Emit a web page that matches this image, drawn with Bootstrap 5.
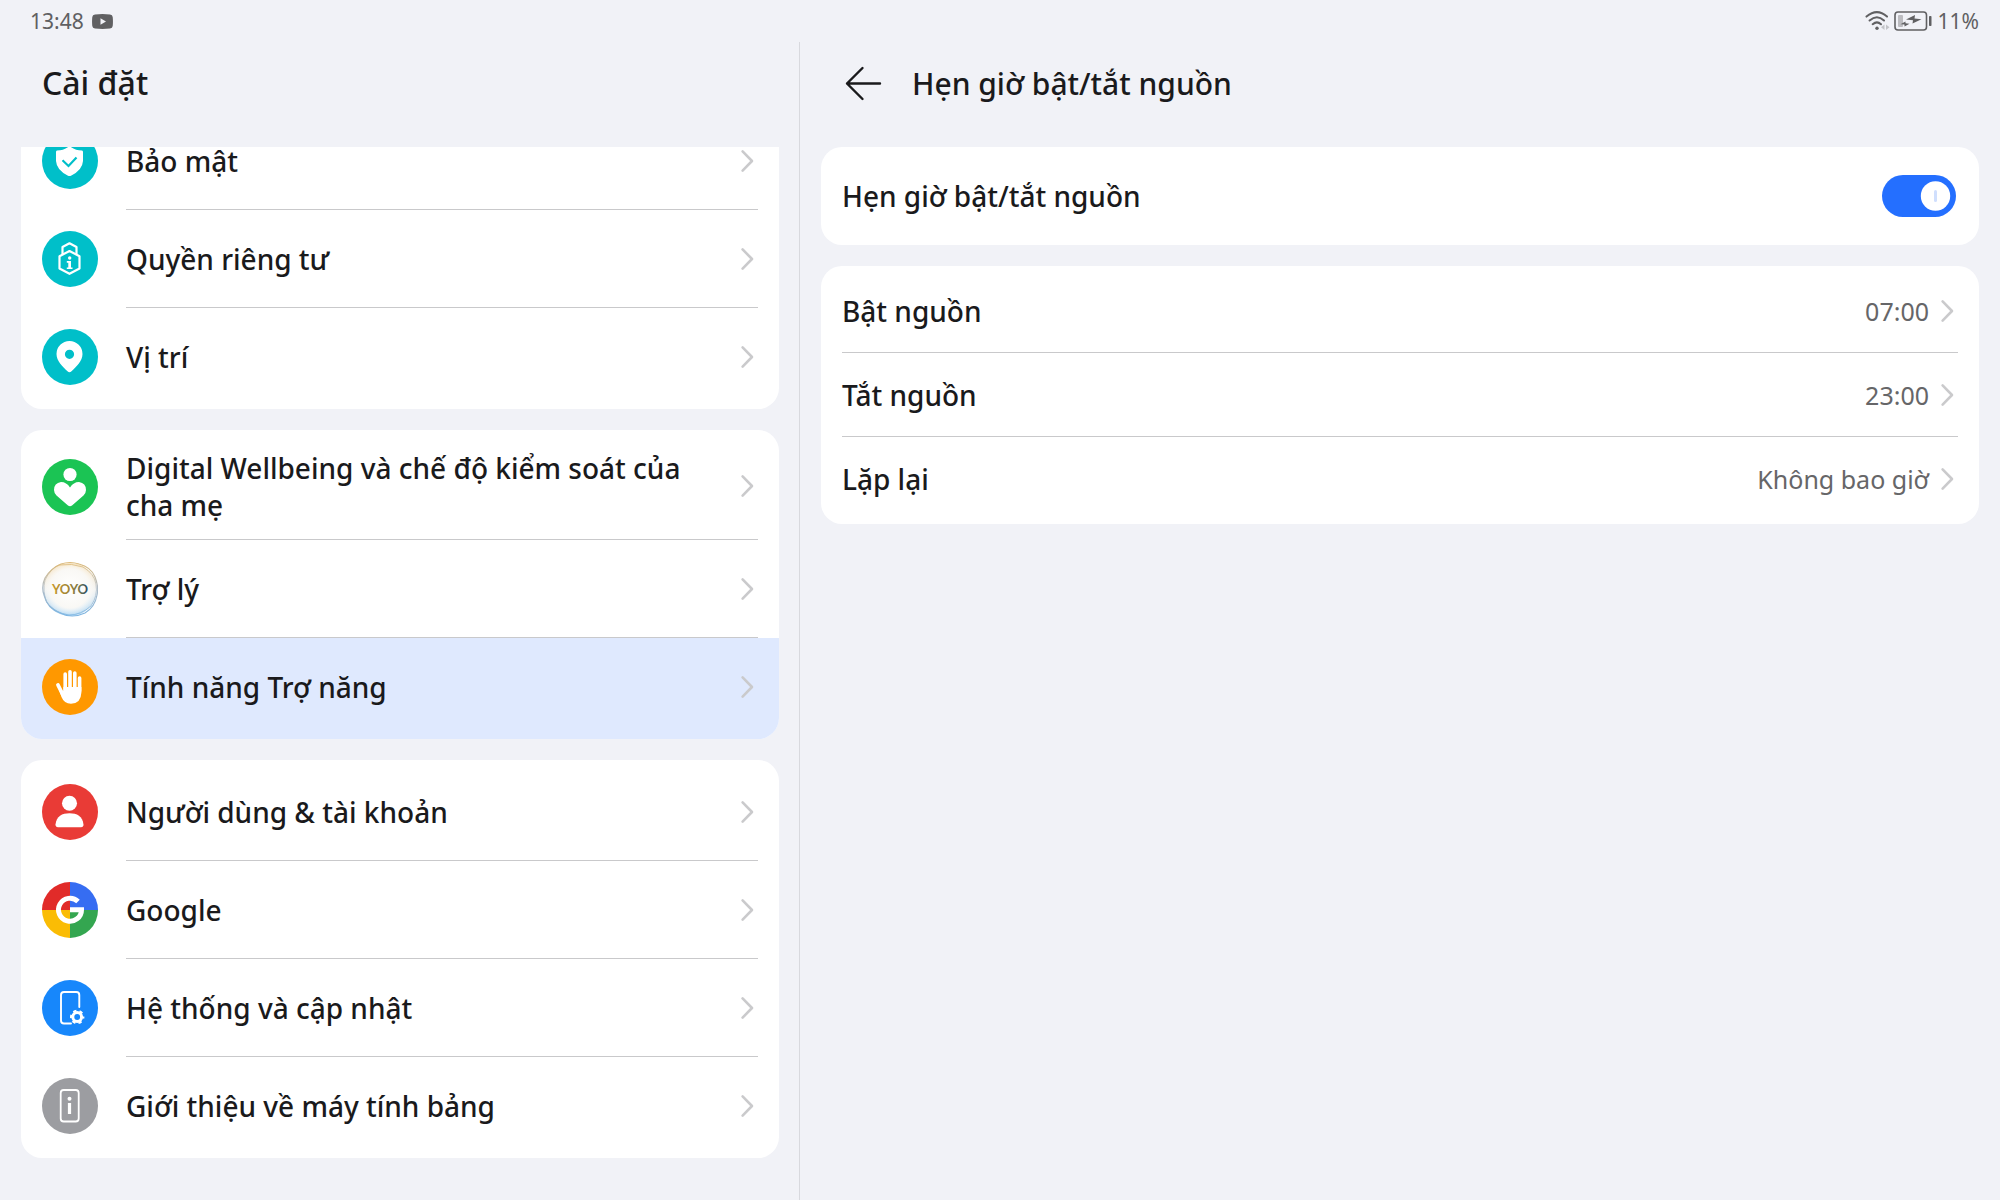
<!DOCTYPE html>
<html lang="vi">
<head>
<meta charset="utf-8">
<meta name="viewport" content="width=device-width, initial-scale=1">
<title>Cài đặt</title>
<link rel="stylesheet" href="https://cdn.jsdelivr.net/npm/bootstrap@5.3.0/dist/css/bootstrap.min.css">
<style>
  body { background: #f1f2f7; color: #1a1a1c; font-family: "Noto Sans", sans-serif; font-size: 28px; line-height: 37px; }
  .status-bar { height: 42px; padding: 0 21px 0 30px; font-size: 21px; line-height: 42px; color: #606062; }
  .status-bar svg { display: block; }
  .pane-menu { flex: 0 0 40%; border-right: 1px solid #d8d9de; }
  .pane-menu, .pane-detail { padding: 0 20px 42px 21px; min-width: 0; }
  .pane-detail { padding-right: 21px; }
  .pane-head { height: 105px; padding: 0 21px 24px; }
  .pane-title { font-size: 32px; line-height: 40px; font-weight: 500; margin: 0; }
  h2.pane-title { font-size: 30px; padding-top: 2px; }
  .back-btn { width: 42px; height: 42px; margin-right: 28px; }
  .stack { display: flex; flex-direction: column; gap: 21px; }
  /* the menu is scrolled, so its first group starts above the list's edge */
  .menu-scrolled { margin-top: -38px; }
  .panel { background: #fff; border-radius: 21px; overflow: hidden; padding: 3px 0; }
  .entry { display: flex; padding: 0 21px; color: inherit; text-decoration: none; }
  .entry-body { flex: 1; min-width: 0; display: flex; align-items: center; justify-content: space-between; padding-right: 4px; min-height: 98px; border-bottom: 1px solid #c9c9cb; }
  .entry:last-child .entry-body { border-bottom-color: transparent; }
  .entry-body.two-line { min-height: 107px; }
  .entry-label { max-width: 580px; padding-top: 2px; font-weight: 500; }
  .entry-icon { width: 56px; height: 56px; flex: none; margin-right: 28px; align-self: center; }
  .panel:has(.active-entry) { padding-bottom: 0; }
  .active-entry { background: #dfe9fe; padding-bottom: 3px; }
  .pane-detail .entry-body { min-height: 84px; }
  .pane-detail .entry-body.single { min-height: 92px; padding-right: 2px; }
  .entry-value { font-size: 25px; color: #666668; margin-right: 11px; padding-top: 2px; }
  .chev { width: 14px; height: 24px; flex: none; fill: none; stroke: #cacacc; stroke-width: 2.6; stroke-linecap: round; stroke-linejoin: round; }
  .power-switch.form-check-input { width: 74px; height: 42px; margin: 0; float: none; border: 0; border-radius: 21px; cursor: pointer; background-size: 74px 42px; }
  .power-switch.form-check-input:checked { background-color: #246fff; background-position: center; background-image: url("data:image/svg+xml,%3csvg xmlns='http://www.w3.org/2000/svg' viewBox='0 0 74 42'%3e%3ccircle cx='53.5' cy='21' r='14.7' fill='%23fff'/%3e%3crect x='52' y='15' width='3' height='12' rx='1.5' fill='%23d0dffd'/%3e%3c/svg%3e"); }
</style>
</head>
<body>
<svg class="d-none" aria-hidden="true">
  <symbol id="chevron" viewBox="0 0 14 24"><path d="M2.600 2.400 L12 12 L2.600 21.600"/></symbol>
</svg>
<div class="d-flex flex-column min-vh-100">
  <header class="status-bar d-flex align-items-center justify-content-between">
    <div class="d-flex align-items-center">
      <span class="me-2">13:48</span>
      <svg width="21" height="15" viewBox="0 0 21 15"><path d="M3 .5Q10.500-.3 18 .5Q20.500.8 20.700 3Q21.200 7.500 20.700 12Q20.500 14.200 18 14.500Q10.500 15.300 3 14.500Q.5 14.200.3 12Q-.2 7.500.3 3Q.5.8 3 .5Z" fill="#606062"/><path d="M8.500 4.300L14 7.500L8.500 10.700Z" fill="#f1f2f7"/></svg>
    </div>
    <div class="d-flex align-items-center">
      <svg class="me-1" width="25" height="20" viewBox="0 0 25 20" fill="none" stroke="#606062" stroke-width="2" stroke-linecap="round"><path d="M1.500 5.600Q12-3.400 22 5.600M4.600 9.500Q12 3 19 9.500M7.700 13.200Q12 9.500 16 13.200"/><circle cx="12" cy="17.300" r="1.700" fill="#606062" stroke="none"/><path d="M19.500 13.500V19L16 16.300ZM21 13.500V19L24.500 16.300Z" fill="#c3c4c8" stroke="none"/></svg>
      <svg width="44" height="20" viewBox="0 0 44 20"><rect x="1" y="1" width="31.500" height="18" rx="3" fill="none" stroke="#606062" stroke-width="1.600"/><rect x="4" y="4" width="5" height="12" rx="1" fill="#bcbcc0"/><rect x="35" y="5" width="2.500" height="10" rx=".8" fill="#606062"/><path d="M12 8.500L21 4L20.500 7.500L27.500 8.200L18.500 12.500L19 9.300ZM6.500 13.200L11.500 10.500V12.300L15.500 12.800L10.500 15.500V13.600Z" fill="#606062"/></svg>
      <span>11%</span>
    </div>
  </header>

  <main class="d-flex flex-grow-1">
    <nav class="pane-menu" aria-label="Cài đặt">
      <div class="pane-head d-flex align-items-center"><h1 class="pane-title">Cài đặt</h1></div>
      <div class="overflow-hidden">
        <div class="stack menu-scrolled">
          <div class="panel">
            <a href="#" class="entry">
              <svg class="entry-icon" viewBox="0 0 56 56"><circle cx="28" cy="28" r="28" fill="#00bfc9"/><path d="M27.500 13Q33 17.500 40 17.500Q41 17.700 41 19V28Q40.500 37 29 42.700Q27.500 43.500 26 42.700Q14.500 37 14 28V19Q14 17.700 15 17.500Q22 17.500 27.500 13Z" fill="#fff"/><path d="M20.500 27.300L26.500 33L34.500 24.500" fill="none" stroke="#00bfc9" stroke-width="2.200"/></svg>
              <span class="entry-body"><span class="entry-label">Bảo mật</span><svg class="chev"><use href="#chevron"/></svg></span>
            </a>
            <a href="#" class="entry">
              <svg class="entry-icon" viewBox="0 0 56 56"><circle cx="28" cy="28" r="28" fill="#00bfc9"/><g fill="none" stroke="#fff" stroke-width="2.200" stroke-linejoin="round"><path d="M20.500 24V16L27.500 12.300L34.500 16V24"/><path d="M27.500 20L37.500 25.200V37.500L27.500 42.800L17.500 37.500V25.200Z"/></g><circle cx="27.700" cy="27" r="1.700" fill="#fff"/><path d="M24.800 30H29V36.500H30.500V38H24.800V36.500H26.300V31.700H24.800Z" fill="#fff"/></svg>
              <span class="entry-body"><span class="entry-label">Quyền riêng tư</span><svg class="chev"><use href="#chevron"/></svg></span>
            </a>
            <a href="#" class="entry">
              <svg class="entry-icon" viewBox="0 0 56 56"><circle cx="28" cy="28" r="28" fill="#00bfc9"/><path fill-rule="evenodd" d="M27.500 12A13 13 0 0 0 14.500 25C14.500 32 20.500 37.500 25.500 42.300Q27.500 44 29.500 42.300C34.500 37.500 40.500 32 40.500 25A13 13 0 0 0 27.500 12ZM27.500 20.700A4.600 4.600 0 1 1 27.500 29.900A4.600 4.600 0 1 1 27.500 20.700Z" fill="#fff"/></svg>
              <span class="entry-body"><span class="entry-label">Vị trí</span><svg class="chev"><use href="#chevron"/></svg></span>
            </a>
          </div>

          <div class="panel">
            <a href="#" class="entry">
              <svg class="entry-icon" viewBox="0 0 56 56"><circle cx="28" cy="28" r="28" fill="#1bc454"/><circle cx="28" cy="15.500" r="6.600" fill="#fff"/><path d="M28 28.500Q24.500 23 19 23Q12 24 12 31Q12 34 14.500 36.500L26 46.500Q28 48 30 46.500L41.500 36.500Q44 34 44 31Q44 24 37 23Q31.500 23 28 28.500Z" fill="#fff"/></svg>
              <span class="entry-body two-line"><span class="entry-label">Digital Wellbeing và chế độ kiểm soát của cha mẹ</span><svg class="chev"><use href="#chevron"/></svg></span>
            </a>
            <a href="#" class="entry">
              <svg class="entry-icon" viewBox="0 -1 56 56">
                <defs>
                  <linearGradient id="rim" x1="0" y1="0" x2="0" y2="1"><stop offset="0" stop-color="#dcb978"/><stop offset=".45" stop-color="#b3bcc4"/><stop offset="1" stop-color="#7db5e2"/></linearGradient>
                  <radialGradient id="bubble" cx=".5" cy=".48" r=".52"><stop offset="0" stop-color="#fff"/><stop offset=".72" stop-color="#f9f8f5"/><stop offset="1" stop-color="#fff" stop-opacity="0"/></radialGradient>
                  <linearGradient id="glow" x1="0" y1="0" x2="0" y2="1"><stop offset="0" stop-color="#f5dfb8"/><stop offset=".5" stop-color="#f1f1ef"/><stop offset="1" stop-color="#b0d7f3"/></linearGradient>
                  <linearGradient id="word" x1="0" x2="1"><stop offset="0" stop-color="#c99a2c"/><stop offset=".5" stop-color="#9c8236"/><stop offset=".75" stop-color="#75744a"/><stop offset="1" stop-color="#204768"/></linearGradient>
                </defs>
                <circle cx="28" cy="27.500" r="26.500" fill="url(#glow)"/><circle cx="28" cy="27.500" r="26" fill="url(#bubble)"/>
                <path d="M19 2Q28-1 37 2Q49 5 53 15Q57 25 55 33Q53 45 43 51Q30 57 18 51Q5 46 2 33Q-1 25 3 16Q9 6 19 2Z" fill="none" stroke="url(#rim)" stroke-width="1.200"/>
                <path d="M17 3Q30 1 41 5Q52 11 54 22Q56 34 49 44Q39 53 27 53Q13 51 5 41Q0 29 3 18Q8 7 17 3Z" fill="none" stroke="url(#rim)" stroke-width=".8"/>
                <text x="28" y="32" text-anchor="middle" font-family="Lato, sans-serif" font-size="13" font-weight="700" fill="url(#word)">YOYO</text>
              </svg>
              <span class="entry-body"><span class="entry-label">Trợ lý</span><svg class="chev"><use href="#chevron"/></svg></span>
            </a>
            <a href="#" class="entry active-entry" aria-current="page">
              <svg class="entry-icon" viewBox="0 0 56 56"><circle cx="28" cy="28" r="28" fill="#ff9800"/><g fill="none" stroke="#fff" stroke-width="3.600" stroke-linecap="round"><path d="M23.200 32V15M28 32V12.800M32.800 32V14M37.600 32V19"/><path d="M16 26L21 36" stroke-width="3.800"/></g><path d="M21.400 28H39.400V33.500Q39 44.500 29 44.800Q22 44.500 19.500 38L17 31L21.400 32Z" fill="#fff"/></svg>
              <span class="entry-body"><span class="entry-label">Tính năng Trợ năng</span><svg class="chev"><use href="#chevron"/></svg></span>
            </a>
          </div>

          <div class="panel">
            <a href="#" class="entry">
              <svg class="entry-icon" viewBox="0 0 56 56"><circle cx="28" cy="28" r="28" fill="#e93b36"/><circle cx="27.500" cy="19.300" r="7.500" fill="#fff"/><path d="M13.500 40.500C14.500 32 20 29.200 27.500 29.200S40.500 32 41.500 40.500Q41.500 43.300 39 43.300H16Q13.500 43.300 13.500 40.500Z" fill="#fff"/></svg>
              <span class="entry-body"><span class="entry-label">Người dùng &amp; tài khoản</span><svg class="chev"><use href="#chevron"/></svg></span>
            </a>
            <a href="#" class="entry">
              <svg class="entry-icon" viewBox="0 0 56 56"><path d="M28 28V0A28 28 0 0 0 0 28Z" fill="#e12b29"/><path d="M28 28V0A28 28 0 0 1 56 28Z" fill="#366df2"/><path d="M28 28H0A28 28 0 0 0 28 56Z" fill="#fabc05"/><path d="M28 28H56A28 28 0 0 1 28 56Z" fill="#34a650"/><path d="M36 19.500A11.500 11.500 0 1 0 39.500 27.700H28" fill="none" stroke="#fff" stroke-width="5"/></svg>
              <span class="entry-body"><span class="entry-label">Google</span><svg class="chev"><use href="#chevron"/></svg></span>
            </a>
            <a href="#" class="entry">
              <svg class="entry-icon" viewBox="0 0 56 56"><circle cx="28" cy="28" r="28" fill="#1787fb"/><path d="M37.300 27V15Q37.300 12 34.300 12H22Q19 12 19 15V40.500Q19 43.500 22 43.500H29" fill="none" stroke="#fff" stroke-width="1.900" stroke-linecap="round"/><circle cx="35.200" cy="37" r="4.400" fill="none" stroke="#fff" stroke-width="3"/><circle cx="35.200" cy="37" r="6.200" fill="none" stroke="#fff" stroke-width="2" stroke-dasharray="3.250 3.250" stroke-dashoffset="1.600"/></svg>
              <span class="entry-body"><span class="entry-label">Hệ thống và cập nhật</span><svg class="chev"><use href="#chevron"/></svg></span>
            </a>
            <a href="#" class="entry">
              <svg class="entry-icon" viewBox="0 0 56 56"><circle cx="28" cy="28" r="28" fill="#9c9da1"/><rect x="18.700" y="12" width="18" height="31.500" rx="3" fill="none" stroke="#fff" stroke-width="1.800"/><circle cx="27.500" cy="20.800" r="2" fill="#fff"/><rect x="25.900" y="25" width="3.200" height="11" fill="#fff"/></svg>
              <span class="entry-body"><span class="entry-label">Giới thiệu về máy tính bảng</span><svg class="chev"><use href="#chevron"/></svg></span>
            </a>
          </div>
        </div>
      </div>
    </nav>

    <section class="pane-detail flex-grow-1">
      <div class="pane-head d-flex align-items-center">
        <button type="button" class="btn back-btn p-0 border-0" aria-label="Quay lại">
          <svg class="d-block" width="42" height="42" viewBox="0 0 42 42" fill="none" stroke="#1a1a1c" stroke-width="2.400" stroke-linecap="round" stroke-linejoin="round"><path d="M20.500 6L5 21.500L20.500 37M5 21.500H38"/></svg>
        </button>
        <h2 class="pane-title">Hẹn giờ bật/tắt nguồn</h2>
      </div>
      <div class="stack">
        <div class="panel">
          <div class="entry">
            <div class="entry-body single">
              <label class="entry-label" for="powerSchedule">Hẹn giờ bật/tắt nguồn</label>
              <div class="form-switch p-0 m-0 d-flex"><input class="form-check-input power-switch" type="checkbox" role="switch" id="powerSchedule" checked></div>
            </div>
          </div>
        </div>
        <div class="panel">
          <a href="#" class="entry"><span class="entry-body"><span class="entry-label">Bật nguồn</span><span class="d-flex align-items-center"><span class="entry-value">07:00</span><svg class="chev"><use href="#chevron"/></svg></span></span></a>
          <a href="#" class="entry"><span class="entry-body"><span class="entry-label">Tắt nguồn</span><span class="d-flex align-items-center"><span class="entry-value">23:00</span><svg class="chev"><use href="#chevron"/></svg></span></span></a>
          <a href="#" class="entry"><span class="entry-body"><span class="entry-label">Lặp lại</span><span class="d-flex align-items-center"><span class="entry-value">Không bao giờ</span><svg class="chev"><use href="#chevron"/></svg></span></span></a>
        </div>
      </div>
    </section>
  </main>
</div>
<script src="https://cdn.jsdelivr.net/npm/bootstrap@5.3.0/dist/js/bootstrap.bundle.min.js"></script>
</body>
</html>
